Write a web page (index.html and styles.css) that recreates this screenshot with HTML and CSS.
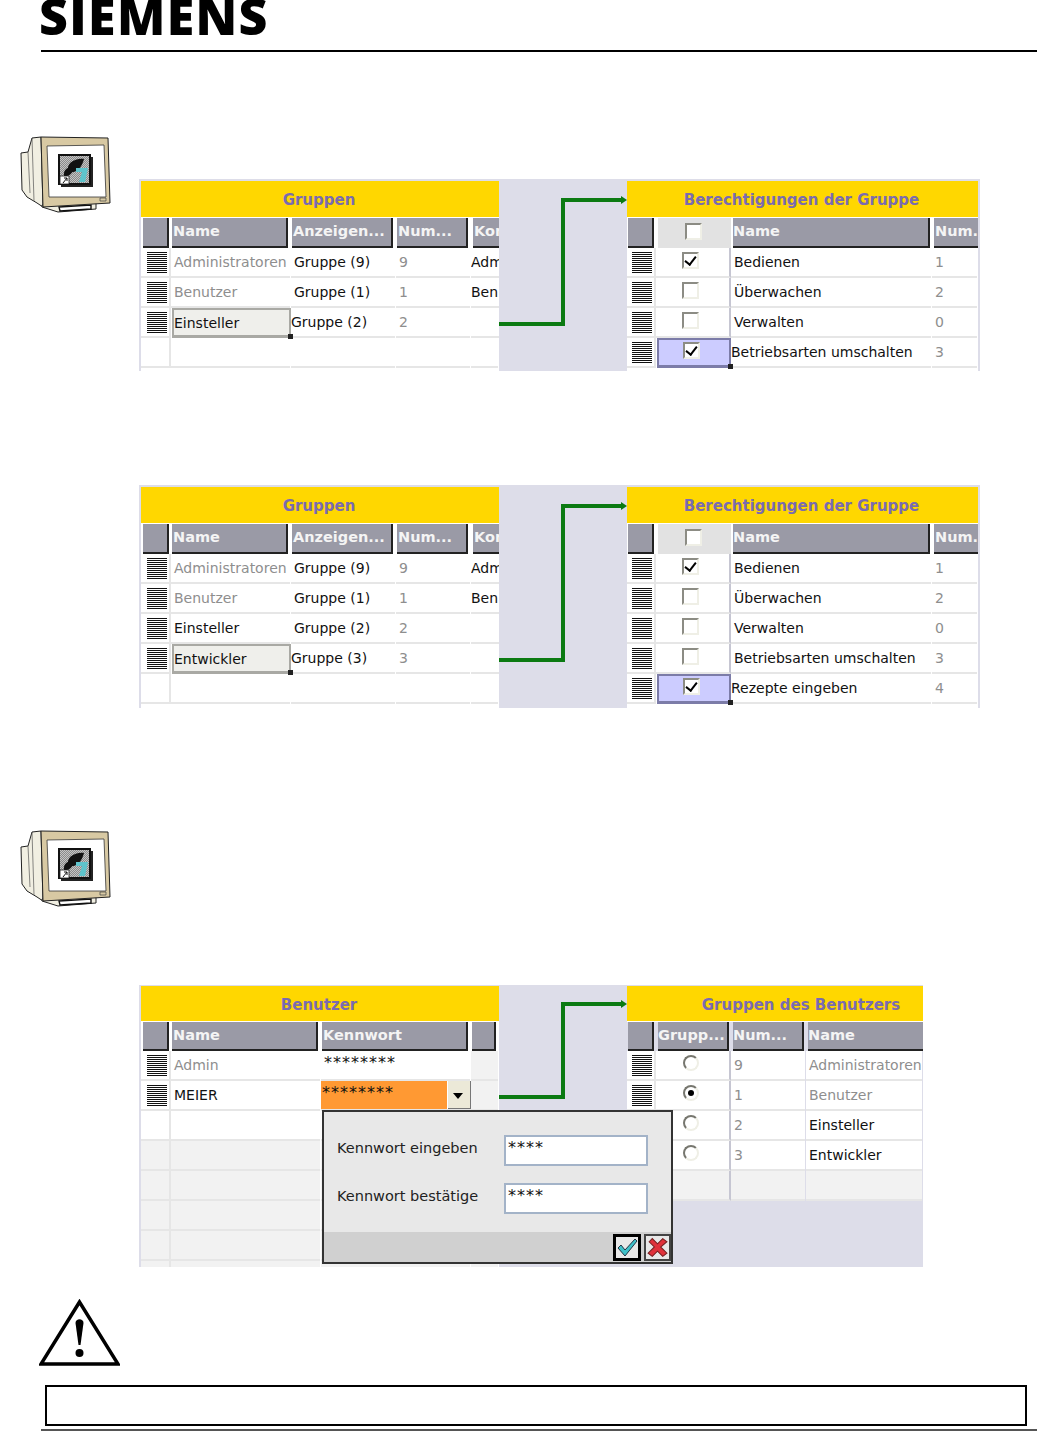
FILE: index.html
```html
<!DOCTYPE html>
<html lang="de">
<head>
  <meta charset="utf-8">
  <title>Benutzerverwaltung</title>
  <link rel="stylesheet" href="styles.css">
</head>
<body>
  <header class="head">
    <div class="logo">SIEMENS</div>
  </header>

  <section class="step step-one">
    <svg class="monitor" viewBox="0 0 92 79">
      <defs>
        <pattern id="dither" width="2" height="2" patternUnits="userSpaceOnUse">
          <rect width="2" height="2" fill="#c4c4c4"/>
          <rect width="1" height="1" fill="#8a8a8a"/>
          <rect x="1" y="1" width="1" height="1" fill="#8a8a8a"/>
        </pattern>
      </defs>
      <path d="M12 3 21 2 23 72 17 68 7 62 2 55 1 18 8 17Z" fill="#f1efe2" stroke="#222" stroke-width="1"/>
      <path d="M8 17 10 58M12 3 14 66" fill="none" stroke="#555" stroke-width=".7"/>
      <path d="M22 72 38 77 76 74 76 68 22 70Z" fill="#f1efe2" stroke="#222" stroke-width="1"/>
      <path d="M39 72 71 70 71 74 40 76Z" fill="#fff" stroke="#111" stroke-width="1.4"/>
      <path d="M21 2 88 3 90 68 23 72Z" fill="#d8c9a3" stroke="#222" stroke-width="1"/>
      <path d="M27 11 84 10 86 62 29 62Z" fill="#fff" stroke="#333" stroke-width=".8"/>
      <path d="M80 63H86V66H80Z" fill="none" stroke="#444" stroke-width=".7"/>
      <rect x="41" y="22" width="32" height="30" fill="#222"/>
      <rect x="39" y="20" width="31" height="29" fill="url(#dither)" stroke="#111" stroke-width="2"/>
      <path d="M48 37C46 28 55 23 64 24 62 32 57 39 48 37Z" fill="#111"/>
      <path d="M56 33H68L65 47H59L62 37H56Z" fill="#5fc4cc"/>
      <path d="M44 41C43 34 49 31 53 34 53 38 49 42 44 41Z" fill="#111"/>
      <rect x="40" y="41" width="9" height="8" fill="#fff" stroke="#222" stroke-width=".8"/>
      <path d="M43 48 47 43M44 43H47V46" fill="none" stroke="#111" stroke-width="1"/>
    </svg>
    <div class="shots">
      <div class="shot shot-a">
        <div class="tbl cols-groups">
          <div class="title">Gruppen</div>
          <div class="hd hd-handle"></div><div class="hd">Name</div><div class="hd">Anzeigen...</div><div class="hd">Num...</div><div class="hd hd-clip">Kor</div>
          <div class="cell handle"><i class="lines"></i></div><div class="cell dim">Administratoren</div><div class="cell">Gruppe (9)</div><div class="cell dim">9</div><div class="cell flush">Adm</div>
          <div class="cell handle"><i class="lines"></i></div><div class="cell dim">Benutzer</div><div class="cell">Gruppe (1)</div><div class="cell dim">1</div><div class="cell flush">Ben</div>
          <div class="cell handle"><i class="lines"></i></div><div class="cell active">Einsteller<b class="grip"></b></div><div class="cell shift">Gruppe (2)</div><div class="cell dim">2</div><div class="cell flush"></div>
          <div class="cell handle"></div><div class="cell"></div><div class="cell"></div><div class="cell"></div><div class="cell"></div>
          <div class="stub"></div>
        </div>
        <svg class="link" viewBox="0 0 128 192">
          <path d="M0 145H64V21H122" fill="none" stroke="#0b7a12" stroke-width="4"/>
          <path d="M122 17 128 21 122 25Z" fill="#0b7a12"/>
        </svg>
        <div class="tbl cols-perm">
          <div class="title">Berechtigungen der Gruppe</div>
          <div class="hd hd-handle-r"></div><div class="hd-check"><i class="box plain"></i></div><div class="hd hd-name">Name</div><div class="hd hd-clip">Num.</div>
          <div class="cell handle"><i class="lines"></i></div><div class="cell check"><i class="box on"></i></div><div class="cell">Bedienen</div><div class="cell dim">1</div>
          <div class="cell handle"><i class="lines"></i></div><div class="cell check"><i class="box"></i></div><div class="cell">Überwachen</div><div class="cell dim">2</div>
          <div class="cell handle"><i class="lines"></i></div><div class="cell check"><i class="box"></i></div><div class="cell">Verwalten</div><div class="cell dim">0</div>
          <div class="cell handle"><i class="lines"></i></div><div class="cell check picked"><i class="box on"></i><b class="grip"></b></div><div class="cell shift">Betriebsarten umschalten</div><div class="cell dim">3</div>
          <div class="stub"></div>
        </div>
      </div>

      <div class="shot shot-b">
        <div class="tbl cols-groups">
          <div class="title">Gruppen</div>
          <div class="hd hd-handle"></div><div class="hd">Name</div><div class="hd">Anzeigen...</div><div class="hd">Num...</div><div class="hd hd-clip">Kor</div>
          <div class="cell handle"><i class="lines"></i></div><div class="cell dim">Administratoren</div><div class="cell">Gruppe (9)</div><div class="cell dim">9</div><div class="cell flush">Adm</div>
          <div class="cell handle"><i class="lines"></i></div><div class="cell dim">Benutzer</div><div class="cell">Gruppe (1)</div><div class="cell dim">1</div><div class="cell flush">Ben</div>
          <div class="cell handle"><i class="lines"></i></div><div class="cell">Einsteller</div><div class="cell">Gruppe (2)</div><div class="cell dim">2</div><div class="cell flush"></div>
          <div class="cell handle"><i class="lines"></i></div><div class="cell active">Entwickler<b class="grip"></b></div><div class="cell shift">Gruppe (3)</div><div class="cell dim">3</div><div class="cell flush"></div>
          <div class="cell handle"></div><div class="cell"></div><div class="cell"></div><div class="cell"></div><div class="cell"></div>
          <div class="stub"></div>
        </div>
        <svg class="link" viewBox="0 0 128 223">
          <path d="M0 175H64V21H122" fill="none" stroke="#0b7a12" stroke-width="4"/>
          <path d="M122 17 128 21 122 25Z" fill="#0b7a12"/>
        </svg>
        <div class="tbl cols-perm">
          <div class="title">Berechtigungen der Gruppe</div>
          <div class="hd hd-handle-r"></div><div class="hd-check"><i class="box plain"></i></div><div class="hd hd-name">Name</div><div class="hd hd-clip">Num.</div>
          <div class="cell handle"><i class="lines"></i></div><div class="cell check"><i class="box on"></i></div><div class="cell">Bedienen</div><div class="cell dim">1</div>
          <div class="cell handle"><i class="lines"></i></div><div class="cell check"><i class="box"></i></div><div class="cell">Überwachen</div><div class="cell dim">2</div>
          <div class="cell handle"><i class="lines"></i></div><div class="cell check"><i class="box"></i></div><div class="cell">Verwalten</div><div class="cell dim">0</div>
          <div class="cell handle"><i class="lines"></i></div><div class="cell check"><i class="box"></i></div><div class="cell">Betriebsarten umschalten</div><div class="cell dim">3</div>
          <div class="cell handle"><i class="lines"></i></div><div class="cell check picked"><i class="box on"></i><b class="grip"></b></div><div class="cell shift">Rezepte eingeben</div><div class="cell dim">4</div>
          <div class="stub"></div>
        </div>
      </div>
    </div>
  </section>

  <section class="step step-two">
    <svg class="monitor" viewBox="0 0 92 79">
      <path d="M12 3 21 2 23 72 17 68 7 62 2 55 1 18 8 17Z" fill="#f1efe2" stroke="#222" stroke-width="1"/>
      <path d="M8 17 10 58M12 3 14 66" fill="none" stroke="#555" stroke-width=".7"/>
      <path d="M22 72 38 77 76 74 76 68 22 70Z" fill="#f1efe2" stroke="#222" stroke-width="1"/>
      <path d="M39 72 71 70 71 74 40 76Z" fill="#fff" stroke="#111" stroke-width="1.4"/>
      <path d="M21 2 88 3 90 68 23 72Z" fill="#d8c9a3" stroke="#222" stroke-width="1"/>
      <path d="M27 11 84 10 86 62 29 62Z" fill="#fff" stroke="#333" stroke-width=".8"/>
      <path d="M80 63H86V66H80Z" fill="none" stroke="#444" stroke-width=".7"/>
      <rect x="41" y="22" width="32" height="30" fill="#222"/>
      <rect x="39" y="20" width="31" height="29" fill="url(#dither)" stroke="#111" stroke-width="2"/>
      <path d="M48 37C46 28 55 23 64 24 62 32 57 39 48 37Z" fill="#111"/>
      <path d="M56 33H68L65 47H59L62 37H56Z" fill="#5fc4cc"/>
      <path d="M44 41C43 34 49 31 53 34 53 38 49 42 44 41Z" fill="#111"/>
      <rect x="40" y="41" width="9" height="8" fill="#fff" stroke="#222" stroke-width=".8"/>
      <path d="M43 48 47 43M44 43H47V46" fill="none" stroke="#111" stroke-width="1"/>
    </svg>
    <div class="shots">
      <div class="shot shot-c">
        <div class="tbl cols-users">
          <div class="title">Benutzer</div>
          <div class="hd hd-handle"></div><div class="hd">Name</div><div class="hd">Kennwort</div><div class="hd hd-end"></div>
          <div class="cell handle"><i class="lines"></i></div><div class="cell dim">Admin</div><div class="cell stars">********</div><div class="cell soft"></div>
          <div class="cell handle"><i class="lines"></i></div><div class="cell">MEIER</div><div class="cell pw"><span class="stars">********</span><span class="drop"></span></div><div class="cell soft"></div>
          <div class="cell handle"></div><div class="cell"></div><div class="cell"></div><div class="cell"></div>
          <div class="cell handle soft"></div><div class="cell soft"></div><div class="cell soft"></div><div class="cell soft"></div>
          <div class="cell handle soft"></div><div class="cell soft"></div><div class="cell soft"></div><div class="cell soft"></div>
          <div class="cell handle soft"></div><div class="cell soft"></div><div class="cell soft"></div><div class="cell soft"></div>
          <div class="cell handle soft"></div><div class="cell soft"></div><div class="cell soft"></div><div class="cell soft"></div>
          <div class="cell handle soft"></div><div class="cell soft"></div><div class="cell soft"></div><div class="cell soft"></div>
        </div>
        <svg class="link" viewBox="0 0 128 282">
          <path d="M0 112H64V19H122" fill="none" stroke="#0b7a12" stroke-width="4"/>
          <path d="M122 15 128 19 122 23Z" fill="#0b7a12"/>
        </svg>
        <div class="tbl cols-usergroups">
          <div class="title title-off">Gruppen des Benutzers</div>
          <div class="hd hd-handle-r"></div><div class="hd hd-name">Grupp...</div><div class="hd hd-name">Num...</div><div class="hd hd-clip hd-name">Name</div>
          <div class="cell handle"><i class="lines"></i></div><div class="cell check"><i class="radio"></i></div><div class="cell dim">9</div><div class="cell dim">Administratoren</div>
          <div class="cell handle"><i class="lines"></i></div><div class="cell check"><i class="radio on"></i></div><div class="cell dim">1</div><div class="cell dim">Benutzer</div>
          <div class="cell handle"></div><div class="cell check"><i class="radio"></i></div><div class="cell dim">2</div><div class="cell">Einsteller</div>
          <div class="cell handle"></div><div class="cell check"><i class="radio"></i></div><div class="cell dim">3</div><div class="cell">Entwickler</div>
          <div class="cell handle soft"></div><div class="cell check soft"></div><div class="cell soft"></div><div class="cell soft"></div>
        </div>

        <div class="popup">
          <div class="popup-body">
            <div class="field"><label class="field-label">Kennwort eingeben</label><div class="field-input">****</div></div>
            <div class="field"><label class="field-label">Kennwort bestätige</label><div class="field-input">****</div></div>
          </div>
          <div class="popup-foot">
            <span class="btn btn-ok">
              <svg viewBox="0 0 22 21"><path d="M2 11 5 8 9 13 19 2 21 4 9 19Z" fill="#3fc1c9" stroke="#234" stroke-width="1"/></svg>
            </span>
            <span class="btn btn-no">
              <svg viewBox="0 0 22 21"><path d="M3 5 6 2 11 7 16 2 20 5 14 10 20 16 16 19 11 14 6 19 2 16 8 10Z" fill="#e0313a" stroke="#722" stroke-width="1"/></svg>
            </span>
          </div>
        </div>
      </div>
    </div>
  </section>

  <svg class="warn" viewBox="0 0 81 68">
    <path d="M40.500 3 2 65H79Z" fill="#fff" stroke="#000" stroke-width="3.500" stroke-linejoin="miter"/>
    <path d="M36.500 24C36.500 19 44.500 19 44.500 24L41.500 46H39.500Z" fill="#000"/>
    <circle cx="40.500" cy="54" r="4" fill="#000"/>
  </svg>

  <div class="note"></div>
  <div class="foot-rule"></div>
</body>
</html>
```

FILE: styles.css
```css
html, body {
  margin: 0;
  padding: 0;
  background: #fff;
  overflow: hidden;
}

body {
  height: 1432px;
  font-family: "DejaVu Sans", Verdana, sans-serif;
  font-size: 14px;
  color: #111;
}

/* page head */
.head {
  margin-left: 41px;
  height: 50px;
  border-bottom: 2px solid #000;
}

.logo {
  margin-left: -2px;
  height: 32px;
  font-family: "Open Sans", sans-serif;
  font-size: 50px;
  font-weight: 800;
  line-height: 32px;
  letter-spacing: 1.400px;
  color: #000;
}

/* icon on the left, screenshots to the right of it */
.step {
  display: grid;
  grid-template-columns: 139px 1fr;
}

.step-one { margin-top: 83px; }
.step-two { margin-top: 121px; }

.monitor {
  width: 92px;
  height: 79px;
  margin-left: 20px;
}

.shots {
  display: flex;
  flex-direction: column;
}

.step-one .shots { padding-top: 44px; }
.step-two .shots { padding-top: 156px; }

.shot {
  position: relative;
  display: flex;
  align-items: flex-start;
  padding: 2px 2px 0;
  background: #dddde9;
  overflow: hidden;
}

.shot-a { width: 841px; height: 192px; box-sizing: border-box; }
.shot-b { width: 841px; height: 223px; box-sizing: border-box; margin-top: 114px; }
.shot-c { width: 784px; height: 282px; box-sizing: border-box; padding: 1px 0 0 2px; }

.link {
  flex: none;
  width: 128px;
  margin-top: -2px;
}

.shot-a .link { height: 192px; }
.shot-b .link { height: 223px; }
.shot-c .link { height: 282px; margin-top: -1px; }

/* tables */
.tbl {
  flex: none;
  display: grid;
  grid-auto-rows: 30px;
  grid-template-rows: 37px 30px;
  background: #fff;
  overflow: hidden;
}

.cols-groups { width: 358px; grid-template-columns: 30px 120px 105px 75px 28px; }
.cols-perm { width: 351px; grid-template-columns: 29px 75px 201px 46px; }
.cols-users { width: 358px; grid-template-columns: 30px 150px 150px 28px; }
.cols-usergroups { width: 296px; grid-template-columns: 29px 75px 75px 117px; }

.shot-c .tbl { grid-template-rows: 36px 29px; }
.cols-usergroups { background: transparent; }

.title {
  grid-column: 1 / -1;
  padding-right: 2px;
  background: #ffd700;
  border-bottom: 1px solid #fff;
  color: #7a6bb0;
  font-weight: bold;
  font-size: 15px;
  line-height: 39px;
  text-align: center;
  white-space: nowrap;
  overflow: hidden;
}

.title-off { padding-left: 54px; }

.hd {
  margin: 0 3px 0 1px;
  padding-left: 1px;
  background: #9a9aa6;
  border-right: 2px solid #222;
  border-bottom: 2px solid #222;
  color: #f4f4f4;
  font-weight: bold;
  font-size: 14.500px;
  line-height: 27px;
  white-space: nowrap;
  overflow: hidden;
}

.hd-handle { margin-left: 2px; margin-right: 2px; }
.hd-handle-r { margin-left: 1px; margin-right: 2px; }
.hd-name { margin-left: 2px; margin-right: 2px; padding-left: 0; }
.hd-clip { margin-left: 2px; margin-right: 0; border-right: 0; }
.hd-end { margin-right: 3px; }

.hd-check {
  display: flex;
  align-items: center;
  justify-content: center;
  margin: 0 0 0 2px;
  background: #e2e2e2;
}

.cell {
  position: relative;
  display: flex;
  align-items: center;
  margin-right: 1px;
  padding-left: 3px;
  border-bottom: 2px solid #e6e6e6;
  background: #fff;
  line-height: 28px;
  white-space: nowrap;
  overflow: hidden;
}

.dim { color: #8e8e8e; }
.flush { padding-left: 0; margin-right: 0; }
.shift { padding-left: 0; overflow: visible; }
.soft { background: #f2f2f2; }

.handle {
  justify-content: center;
  padding-left: 0;
  margin-right: 0;
  border-right: 2px solid #e6e6e6;
}

.lines {
  display: block;
  width: 20px;
  height: 22px;
  margin: 1px 0 0 3px;
  background: repeating-linear-gradient(#111 0, #111 1px, #fff 1px, #fff 2px);
}

.check {
  justify-content: center;
  padding-left: 0;
  padding-right: 5px;
  margin-right: 0;
  border-right: 2px solid #c6c6d2;
  overflow: visible;
}

.box {
  position: relative;
  display: block;
  box-sizing: border-box;
  width: 17px;
  height: 17px;
  margin-top: -4px;
  border-style: solid;
  border-width: 2px;
  border-color: #8c8c84 #efefe6 #efefe6 #8c8c84;
  background: #fff;
}

.box.plain { margin: -3px 0 0 -3px; }

.box.on::after {
  content: "";
  position: absolute;
  left: 3px;
  top: 0;
  width: 5px;
  height: 9px;
  border-right: 2.500px solid #000;
  border-bottom: 2.500px solid #000;
  transform: rotate(38deg);
}

.radio {
  position: relative;
  display: block;
  box-sizing: border-box;
  width: 16px;
  height: 16px;
  margin-top: -5px;
  margin-left: 1px;
  border: 2px solid;
  border-color: #77776f #efefe6 #efefe6 #77776f;
  border-radius: 50%;
  background: #fff;
}

.radio.on::after {
  content: "";
  position: absolute;
  left: 3px;
  top: 3px;
  width: 6px;
  height: 6px;
  border-radius: 50%;
  background: #000;
}

/* selected cells */
.active,
.picked {
  overflow: visible;
  z-index: 1;
  box-sizing: border-box;
  margin-left: 1px;
  margin-right: 0;
  padding-left: 0;
  border: 3px solid #a9a9a4;
  border-width: 2px 2px 3px 2px;
  background: #efefeb;
}

.picked {
  background: #ccccff;
  border-color: #7c7ca8;
  padding-right: 6px;
}

.grip {
  position: absolute;
  right: -4px;
  bottom: -4px;
  width: 5px;
  height: 5px;
  background: #222;
}

.stub {
  grid-column: 1 / -1;
  background: #fff;
}

/* password column */
.stars {
  align-items: flex-start;
  font-size: 16px;
  line-height: 24px;
  letter-spacing: 1px;
}

.pw {
  align-items: stretch;
  padding-left: 0;
  margin-right: 0;
  background: #fff;
  overflow: visible;
}

.pw .stars {
  flex: 1;
  padding-left: 1px;
  background: #ff9933;
}

.drop {
  position: relative;
  flex: none;
  width: 22px;
  margin-left: 1px;
  background: #ece9d8;
  border-right: 1px solid #777;
  border-bottom: 1px solid #777;
}

.drop::after {
  content: "";
  position: absolute;
  left: 5px;
  top: 12px;
  border-style: solid;
  border-width: 6px 5px 0;
  border-color: #000 transparent transparent;
}

/* password dialog over the tables */
.popup {
  position: absolute;
  left: 183px;
  top: 125px;
  box-sizing: border-box;
  display: flex;
  flex-direction: column;
  width: 351px;
  height: 154px;
  border: 2px solid #333;
  background: #e8e8e8;
}

.popup-body {
  flex: 1;
  display: flex;
  flex-direction: column;
  gap: 17px;
  padding: 23px 0 0 13px;
}

.field {
  display: flex;
  align-items: center;
}

.field-label {
  width: 167px;
  margin-top: -6px;
  font-size: 14.500px;
  color: #222;
}

.field-input {
  box-sizing: border-box;
  width: 144px;
  height: 31px;
  padding-left: 2px;
  border: 2px solid #a3b3c8;
  background: #fff;
  font-size: 16px;
  line-height: 22px;
  letter-spacing: 1px;
}

.popup-foot {
  display: flex;
  justify-content: flex-end;
  align-items: center;
  gap: 3px;
  height: 30px;
  background: #d0d0d0;
}

.btn {
  box-sizing: border-box;
  display: flex;
  width: 28px;
  height: 27px;
  background: #e8e8e8;
}

.btn svg {
  width: 100%;
  height: 100%;
}

.btn-ok { border: 3px solid #000; }
.btn-no { border: 2px solid #444; width: 27px; }

/* bottom of page */
.warn {
  display: block;
  width: 81px;
  height: 68px;
  margin: 32px 0 0 39px;
}

.note {
  box-sizing: border-box;
  width: 982px;
  height: 41px;
  margin: 18px 0 0 45px;
  border: 2px solid #000;
}

.foot-rule {
  height: 2px;
  margin: 3px 0 0 41px;
  background: #555;
}
```
